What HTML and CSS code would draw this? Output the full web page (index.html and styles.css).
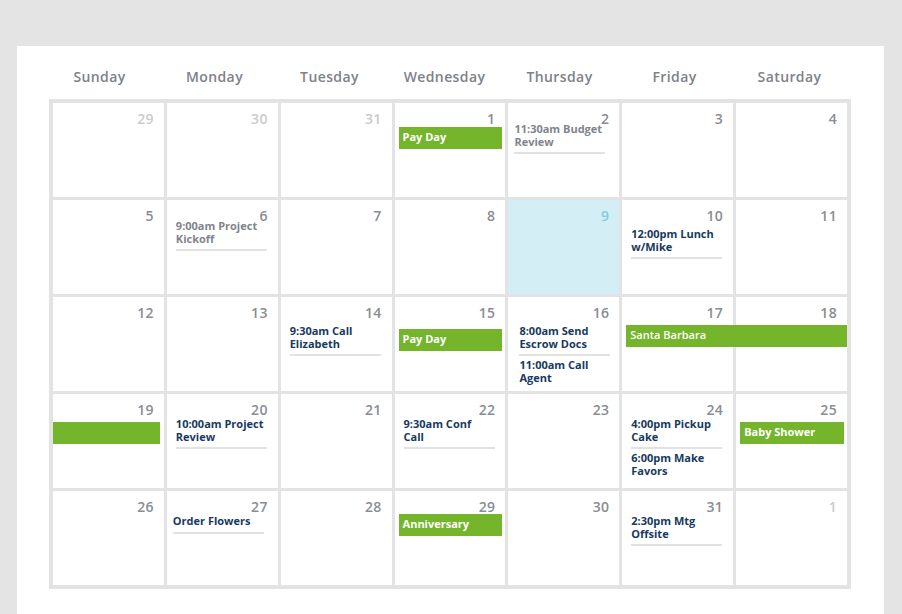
FILE: index.html
```html
<!DOCTYPE html>
<html lang="en">
<head>
<meta charset="utf-8">
<title>Calendar</title>
<link rel="stylesheet" href="styles.css">
</head>
<body>
<main class="panel">
  <div class="weekdays">
    <div class="weekday">Sunday</div>
    <div class="weekday">Monday</div>
    <div class="weekday">Tuesday</div>
    <div class="weekday">Wednesday</div>
    <div class="weekday">Thursday</div>
    <div class="weekday">Friday</div>
    <div class="weekday">Saturday</div>
  </div>
  <div class="month">
    <!-- Row 1 -->
    <div class="cell cell--muted"><div class="num">29</div></div>
    <div class="cell cell--muted"><div class="num">30</div></div>
    <div class="cell cell--muted"><div class="num">31</div></div>
    <div class="cell"><div class="num">1</div><div class="bar">Pay Day</div></div>
    <div class="cell"><div class="num">2</div>
      <div class="events events--up events--left"><div class="ev ev--past">11:30am Budget<br>Review</div></div>
    </div>
    <div class="cell"><div class="num">3</div></div>
    <div class="cell"><div class="num">4</div></div>
    <!-- Row 2 -->
    <div class="cell"><div class="num">5</div></div>
    <div class="cell"><div class="num">6</div>
      <div class="events events--up"><div class="ev ev--past">9:00am Project<br>Kickoff</div></div>
    </div>
    <div class="cell"><div class="num">7</div></div>
    <div class="cell"><div class="num">8</div></div>
    <div class="cell cell--today"><div class="num">9</div></div>
    <div class="cell"><div class="num">10</div>
      <div class="events events--down"><div class="ev">12:00pm Lunch<br>w/Mike</div></div>
    </div>
    <div class="cell"><div class="num">11</div></div>
    <!-- Row 3 -->
    <div class="cell"><div class="num">12</div></div>
    <div class="cell"><div class="num">13</div></div>
    <div class="cell"><div class="num">14</div>
      <div class="events events--down"><div class="ev">9:30am Call<br>Elizabeth</div></div>
    </div>
    <div class="cell"><div class="num">15</div><div class="bar bar--low">Pay Day</div></div>
    <div class="cell"><div class="num">16</div>
      <div class="events events--down events--right">
        <div class="ev">8:00am Send<br>Escrow Docs</div>
        <div class="ev">11:00am Call<br>Agent</div>
      </div>
    </div>
    <div class="cell"><div class="num">17</div><div class="bar bar--mid bar--span">Santa Barbara</div></div>
    <div class="cell"><div class="num">18</div></div>
    <!-- Row 4 -->
    <div class="cell"><div class="num">19</div><div class="bar bar--mid bar--cont"></div></div>
    <div class="cell"><div class="num">20</div>
      <div class="events"><div class="ev">10:00am Project<br>Review</div></div>
    </div>
    <div class="cell"><div class="num">21</div></div>
    <div class="cell"><div class="num">22</div>
      <div class="events"><div class="ev">9:30am Conf<br>Call</div></div>
    </div>
    <div class="cell"><div class="num">23</div></div>
    <div class="cell"><div class="num">24</div>
      <div class="events">
        <div class="ev">4:00pm Pickup<br>Cake</div>
        <div class="ev">6:00pm Make<br>Favors</div>
      </div>
    </div>
    <div class="cell"><div class="num">25</div><div class="bar bar--mid">Baby Shower</div></div>
    <!-- Row 5 -->
    <div class="cell"><div class="num">26</div></div>
    <div class="cell"><div class="num">27</div>
      <div class="events events--left"><div class="ev ev--single">Order Flowers</div></div>
    </div>
    <div class="cell"><div class="num">28</div></div>
    <div class="cell"><div class="num">29</div><div class="bar bar--high">Anniversary</div></div>
    <div class="cell"><div class="num">30</div></div>
    <div class="cell"><div class="num">31</div>
      <div class="events"><div class="ev">2:30pm Mtg<br>Offsite</div></div>
    </div>
    <div class="cell cell--muted"><div class="num">1</div></div>
  </div>
</main>
</body>
</html>
```

FILE: styles.css
```css
* {
  box-sizing: border-box;
}

html, body {
  margin: 0;
  padding: 0;
  background: #e4e4e4;
  overflow: hidden;
}

body {
  font-family: "Open Sans", "Liberation Sans", sans-serif;
  height: 614px;
}

.panel {
  margin: 46px 0 0 17px;
  width: 867px;
  height: 568px;
  background: #ffffff;
  padding: 0 0 0 32px;
}

.weekdays {
  display: grid;
  grid-template-columns: repeat(7, 115px);
  margin-left: -7px;
  padding: 22px 0 14px;
}

.weekday {
  text-align: center;
  font-size: 14px;
  line-height: 17px;
  font-weight: 600;
  color: #7d828a;
  letter-spacing: 0.4px;
}

.month {
  display: grid;
  grid-template-columns: repeat(7, 1fr);
  grid-template-rows: repeat(5, 94px);
  gap: 3px;
  width: 802px;
  border: 4px solid #e3e3e3;
  background: #e3e3e3;
}

.cell {
  background: #ffffff;
  padding-top: 8px;
  min-width: 0;
}

.cell--today {
  background: #d3eef5;
}

.num {
  text-align: right;
  padding-right: 10px;
  font-size: 14px;
  line-height: 16px;
  font-weight: 600;
  color: #8a8d93;
  letter-spacing: 0.3px;
}

.cell--muted .num {
  color: #cbcbcb;
}

.cell--today .num {
  color: #7fcfe1;
}

.events {
  margin: -1px 0 0 9px;
  width: 91px;
  display: flex;
  flex-direction: column;
  gap: 2px;
}

.events--up {
  margin-top: -5px;
}

.events--down {
  margin-top: 3px;
}

.events--left {
  margin-left: 6px;
}

.events--right {
  margin-left: 11px;
}

.ev {
  font-size: 11px;
  line-height: 13px;
  font-weight: 700;
  color: #173a5e;
  white-space: nowrap;
  padding-bottom: 4px;
  border-bottom: 2px solid #e2e2e2;
}

.ev--single {
  padding-bottom: 5px;
}

.ev:not(:only-child):last-child {
  border-bottom: 0;
}

.ev--past {
  color: #80858c;
}

.bar {
  position: relative;
  margin: 0 3px 0 4px;
  height: 22px;
  padding: 0 4px 2px;
  background: #74b52b;
  color: #ffffff;
  font-size: 11px;
  line-height: 20px;
  font-weight: 700;
  white-space: nowrap;
}

.bar--high {
  margin-top: -1px;
}

.bar--mid {
  margin-top: 4px;
}

.bar--low {
  margin-top: 8px;
}

.bar--span {
  width: calc(200% - 1px);
  margin-right: 0;
  font-weight: 600;
  z-index: 1;
}

.bar--cont {
  margin-left: 0;
  margin-right: 4px;
}
```
